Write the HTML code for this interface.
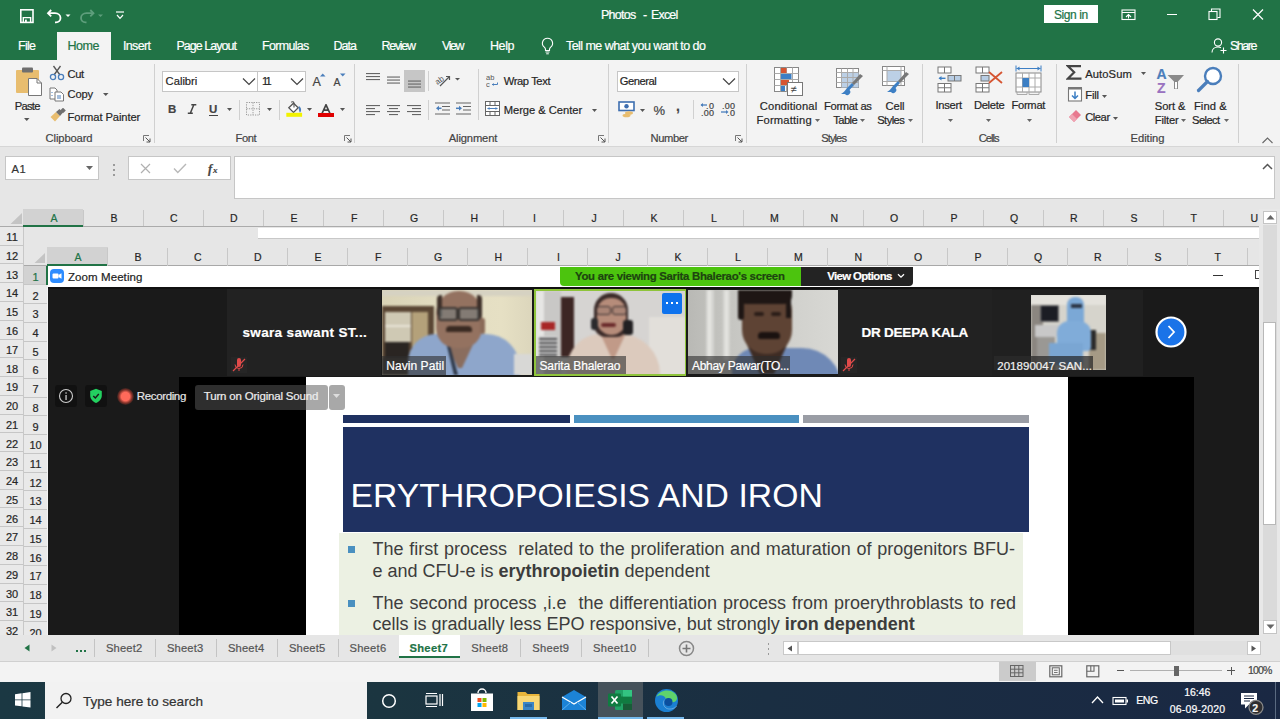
<!DOCTYPE html>
<html><head><meta charset="utf-8">
<style>
*{margin:0;padding:0;box-sizing:border-box}
html,body{width:1280px;height:719px;overflow:hidden;background:#f3f3f3;font-family:"Liberation Sans", sans-serif;position:relative}
.a{position:absolute;display:block}
.t{position:absolute;white-space:pre;line-height:1;-webkit-text-stroke:0.2px currentColor}
</style></head><body>
<div class="a" style="left:0px;top:0px;width:1280px;height:60px;background:#217346;"></div>
<svg class="a" style="left:19px;top:8px;" width="16" height="16" viewBox="0 0 16 16"><rect x="1.8" y="1.8" width="12.2" height="12.6" fill="none" stroke="#fff" stroke-width="1.6"/><path d="M4.3 14.2 V9.6 H11.6 V14.2" fill="none" stroke="#fff" stroke-width="1.4"/><rect x="6" y="11.6" width="1.8" height="2.6" fill="#fff"/></svg>
<svg class="a" style="left:46px;top:8px;" width="28" height="16" viewBox="0 0 28 16"><path d="M5.2 2 L2 5.2 L5.2 8.4" fill="none" stroke="#fff" stroke-width="1.8"/><path d="M2.5 5.2 H9 C12.3 5.2 14.5 7.3 14.5 10 C14.5 12.5 12.5 14.3 10 14.3 H9" fill="none" stroke="#fff" stroke-width="1.8"/><path d="M19.5 6.5h5l-2.5 2.5z" fill="#fff"/></svg>
<svg class="a" style="left:79px;top:8px;" width="28" height="16" viewBox="0 0 28 16"><path d="M11.3 2 L14.5 5.2 L11.3 8.4" fill="none" stroke="#5e9e7c" stroke-width="1.8"/><path d="M14 5.2 H7.5 C4.2 5.2 2 7.3 2 10 C2 12.5 4 14.3 6.5 14.3 H7.5" fill="none" stroke="#5e9e7c" stroke-width="1.8"/><path d="M19 6.5h5l-2.5 2.5z" fill="#5e9e7c"/></svg>
<svg class="a" style="left:114px;top:10px;" width="12" height="12" viewBox="0 0 12 12"><path d="M2 2h8" stroke="#fff" stroke-width="1.2"/><path d="M3 5 L6 8.3 L9 5" fill="none" stroke="#fff" stroke-width="1.2"/></svg>
<div class="t" style="left:601.00px;top:9.00px;font-size:12.5px;color:#fff;letter-spacing:-0.733px;">Photos</div>
<div class="t" style="left:643.00px;top:9.00px;font-size:12.5px;color:#fff;">-</div>
<div class="t" style="left:651.00px;top:9.00px;font-size:12.5px;color:#fff;letter-spacing:-0.822px;">Excel</div>
<div class="a" style="left:1044px;top:5px;width:54px;height:18px;background:#fff;"></div>
<div class="t" style="left:1054.00px;top:9.00px;font-size:12px;color:#217346;letter-spacing:-0.420px;">Sign in</div>
<svg class="a" style="left:1121px;top:9px;" width="16" height="12" viewBox="0 0 16 12"><rect x="1" y="1" width="13" height="9.5" fill="none" stroke="#fff" stroke-width="1.1"/><path d="M1 3.5h13" stroke="#fff" stroke-width="1"/><path d="M5 8 L7.5 5.5 L10 8" fill="none" stroke="#fff" stroke-width="1.1"/><path d="M7.5 5.5v4" stroke="#fff" stroke-width="1"/></svg>
<div class="a" style="left:1167px;top:14px;width:10px;height:1.2px;background:#fff;"></div>
<svg class="a" style="left:1208px;top:8px;" width="14" height="13" viewBox="0 0 14 13"><rect x="1" y="3.5" width="8" height="8" fill="none" stroke="#fff" stroke-width="1.1"/><path d="M3.5 3.5V1h8.5v8.5h-2.5" fill="none" stroke="#fff" stroke-width="1.1"/></svg>
<svg class="a" style="left:1252px;top:9px;" width="12" height="11" viewBox="0 0 12 11"><path d="M1 0.5 L11 10.5 M11 0.5 L1 10.5" stroke="#fff" stroke-width="1.2"/></svg>
<div class="a" style="left:57px;top:32px;width:54px;height:28px;background:#f3f3f3;"></div>
<div class="t" style="left:18.00px;top:40.00px;font-size:12.5px;color:#fff;letter-spacing:-0.730px;">File</div>
<div class="t" style="left:67.50px;top:40.00px;font-size:12.5px;color:#217346;letter-spacing:-0.464px;">Home</div>
<div class="t" style="left:123.00px;top:40.00px;font-size:12.5px;color:#fff;letter-spacing:-0.658px;">Insert</div>
<div class="t" style="left:176.50px;top:40.00px;font-size:12.5px;color:#fff;letter-spacing:-0.972px;">Page Layout</div>
<div class="t" style="left:262.00px;top:40.00px;font-size:12.5px;color:#fff;letter-spacing:-0.692px;">Formulas</div>
<div class="t" style="left:333.50px;top:40.00px;font-size:12.5px;color:#fff;letter-spacing:-0.984px;">Data</div>
<div class="t" style="left:381.50px;top:40.00px;font-size:12.5px;color:#fff;letter-spacing:-1.292px;">Review</div>
<div class="t" style="left:442.00px;top:40.00px;font-size:12.5px;color:#fff;letter-spacing:-1.447px;">View</div>
<div class="t" style="left:490.00px;top:40.00px;font-size:12.5px;color:#fff;letter-spacing:-0.419px;">Help</div>
<svg class="a" style="left:540px;top:37px;" width="15" height="18" viewBox="0 0 15 18"><path d="M7.5 1.2a5 5 0 0 0-3.2 8.9c.8.7 1.2 1.5 1.2 2.4v1h4v-1c0-.9.4-1.7 1.2-2.4A5 5 0 0 0 7.5 1.2z" fill="none" stroke="#fff" stroke-width="1.1"/><path d="M5.5 15h4M6.2 16.8h2.6" stroke="#fff" stroke-width="1"/></svg>
<div class="t" style="left:566.00px;top:40.00px;font-size:12.5px;color:#fff;letter-spacing:-0.550px;">Tell me what you want to do</div>
<svg class="a" style="left:1211px;top:37px;" width="17" height="17" viewBox="0 0 17 17"><circle cx="7" cy="5.5" r="3.6" fill="none" stroke="#fff" stroke-width="1.1"/><path d="M1 15.5c0-3.5 2.7-5.5 6-5.5 1.3 0 2.3.3 3 .7" fill="none" stroke="#fff" stroke-width="1.1"/><path d="M12.5 10.5v6M9.5 13.5h6" stroke="#fff" stroke-width="1.1"/></svg>
<div class="t" style="left:1230.00px;top:40.00px;font-size:12.5px;color:#fff;letter-spacing:-1.476px;">Share</div>
<div class="a" style="left:0px;top:60px;width:1280px;height:86px;background:#f3f3f3;"></div>
<div class="a" style="left:0px;top:146px;width:1280px;height:1px;background:#d6d6d6;"></div>
<div class="a" style="left:154px;top:64px;width:1px;height:79px;background:#d0d0d0;"></div>
<div class="a" style="left:354px;top:64px;width:1px;height:79px;background:#d0d0d0;"></div>
<div class="a" style="left:608px;top:64px;width:1px;height:79px;background:#d0d0d0;"></div>
<div class="a" style="left:746px;top:64px;width:1px;height:79px;background:#d0d0d0;"></div>
<div class="a" style="left:922px;top:64px;width:1px;height:79px;background:#d0d0d0;"></div>
<div class="a" style="left:1056px;top:64px;width:1px;height:79px;background:#d0d0d0;"></div>
<div class="a" style="left:1238px;top:64px;width:1px;height:79px;background:#d0d0d0;"></div>
<div class="t" style="left:45.60px;top:133.00px;font-size:11.2px;color:#444;letter-spacing:-0.120px;">Clipboard</div>
<div class="t" style="left:235.60px;top:133.00px;font-size:11.2px;color:#444;letter-spacing:-0.459px;">Font</div>
<div class="t" style="left:448.80px;top:133.00px;font-size:11.2px;color:#444;letter-spacing:-0.155px;">Alignment</div>
<div class="t" style="left:650.60px;top:133.00px;font-size:11.2px;color:#444;letter-spacing:-0.433px;">Number</div>
<div class="t" style="left:821.20px;top:133.00px;font-size:11.2px;color:#444;letter-spacing:-0.934px;">Styles</div>
<div class="t" style="left:978.80px;top:133.00px;font-size:11.2px;color:#444;letter-spacing:-1.018px;">Cells</div>
<div class="t" style="left:1130.60px;top:133.00px;font-size:11.2px;color:#444;letter-spacing:-0.048px;">Editing</div>
<svg class="a" style="left:143px;top:135px;" width="8" height="8" viewBox="0 0 8 8"><path d="M0.5 6V0.5H6" fill="none" stroke="#777" stroke-width="1"/><path d="M2.5 2.5L7 7M7 3.5V7H3.5" fill="none" stroke="#555" stroke-width="1"/></svg>
<svg class="a" style="left:344px;top:135px;" width="8" height="8" viewBox="0 0 8 8"><path d="M0.5 6V0.5H6" fill="none" stroke="#777" stroke-width="1"/><path d="M2.5 2.5L7 7M7 3.5V7H3.5" fill="none" stroke="#555" stroke-width="1"/></svg>
<svg class="a" style="left:598px;top:135px;" width="8" height="8" viewBox="0 0 8 8"><path d="M0.5 6V0.5H6" fill="none" stroke="#777" stroke-width="1"/><path d="M2.5 2.5L7 7M7 3.5V7H3.5" fill="none" stroke="#555" stroke-width="1"/></svg>
<svg class="a" style="left:735px;top:135px;" width="8" height="8" viewBox="0 0 8 8"><path d="M0.5 6V0.5H6" fill="none" stroke="#777" stroke-width="1"/><path d="M2.5 2.5L7 7M7 3.5V7H3.5" fill="none" stroke="#555" stroke-width="1"/></svg>
<svg class="a" style="left:1262px;top:137px;" width="11" height="7" viewBox="0 0 11 7"><path d="M0.5 6 L5.5 1 L10.5 6" fill="none" stroke="#666" stroke-width="1.1"/></svg>
<svg class="a" style="left:15px;top:66px;" width="30" height="31" viewBox="0 0 30 31"><rect x="1" y="4" width="23" height="23" rx="1" fill="#e8bd6f"/><rect x="7" y="1.5" width="11" height="5" rx="1" fill="#6f6f6f"/><path d="M13.5 12.5h8.5l4.5 4.5v12.5h-13z" fill="#fff" stroke="#777" stroke-width="1"/><path d="M22 12.5v4.5h4.5" fill="none" stroke="#777" stroke-width="1"/></svg>
<div class="t" style="left:14.80px;top:101.00px;font-size:11.2px;color:#262626;letter-spacing:-0.746px;">Paste</div>
<svg class="a" style="left:24px;top:118px;" width="6" height="4" viewBox="0 0 6 4"><path d="M0 0h5.5L2.75 3z" fill="#555"/></svg>
<svg class="a" style="left:49px;top:65px;" width="16" height="16" viewBox="0 0 16 16"><path d="M4.5 1 L11 10 M11.5 1 L5 10" stroke="#555" stroke-width="1.3"/><circle cx="4" cy="12" r="2.6" fill="none" stroke="#4a7ebb" stroke-width="1.3"/><circle cx="12" cy="12" r="2.6" fill="none" stroke="#4a7ebb" stroke-width="1.3"/></svg>
<div class="t" style="left:67.50px;top:69.00px;font-size:11.2px;color:#262626;letter-spacing:-0.401px;">Cut</div>
<svg class="a" style="left:49px;top:87px;" width="16" height="15" viewBox="0 0 16 15"><path d="M1 1h5l2 2v9H1z" fill="#fff" stroke="#777" stroke-width="1"/><path d="M6 5h6l2.5 2.5V14H6z" fill="#fff" stroke="#777" stroke-width="1"/><path d="M8 9h4M8 11h4" stroke="#4a7ebb" stroke-width="1"/><path d="M3 5v1M3 8v1" stroke="#4a7ebb" stroke-width="1"/></svg>
<div class="t" style="left:67.50px;top:89.00px;font-size:11.2px;color:#262626;letter-spacing:-0.174px;">Copy</div>
<svg class="a" style="left:103px;top:93px;" width="6" height="4" viewBox="0 0 6 4"><path d="M0 0h5.5L2.75 3z" fill="#555"/></svg>
<svg class="a" style="left:49px;top:108px;" width="17" height="15" viewBox="0 0 17 15"><path d="M1.5 9 L7 4 L11 8 L6 13.5z" fill="#e8bd6f"/><path d="M7 4 L10.5 1 L14 4.5 L11 8z" fill="#6f6f6f"/><rect x="12" y="0.5" width="4" height="4" transform="rotate(45 14 2.5)" fill="#6f6f6f"/></svg>
<div class="t" style="left:67.50px;top:112.00px;font-size:11.2px;color:#262626;letter-spacing:-0.089px;">Format Painter</div>
<div class="a" style="left:162px;top:70.5px;width:96px;height:21px;background:#fff;border:1px solid #c6c6c6"></div>
<div class="a" style="left:257px;top:70.5px;width:49px;height:21px;background:#fff;border:1px solid #c6c6c6"></div>
<div class="t" style="left:165.60px;top:76.00px;font-size:11.2px;color:#262626;">Calibri</div>
<div class="t" style="left:262.00px;top:76.00px;font-size:11.2px;color:#262626;letter-spacing:-1.891px;">11</div>
<svg class="a" style="left:242px;top:77px;" width="14" height="9" viewBox="0 0 14 9"><path d="M1 1.5 L7 7.5 L13 1.5" fill="none" stroke="#444" stroke-width="1.2"/></svg>
<svg class="a" style="left:290px;top:77px;" width="14" height="9" viewBox="0 0 14 9"><path d="M1 1.5 L7 7.5 L13 1.5" fill="none" stroke="#444" stroke-width="1.2"/></svg>
<div class="t" style="left:312.40px;top:76.00px;font-size:12.5px;color:#444;">A</div>
<svg class="a" style="left:320px;top:73px;" width="6" height="4" viewBox="0 0 6 4"><path d="M0 3.5h5.5L2.75 0.5z" fill="#4a7ebb"/></svg>
<div class="t" style="left:333.40px;top:77.00px;font-size:10.5px;color:#444;">A</div>
<svg class="a" style="left:340px;top:73px;" width="6" height="4" viewBox="0 0 6 4"><path d="M0 0.5h5.5L2.75 3.5z" fill="#4a7ebb"/></svg>
<div class="t" style="left:168.00px;top:104.00px;font-size:11.5px;color:#444;font-weight:700;">B</div>
<svg class="a" style="left:187px;top:104px;" width="10" height="10" viewBox="0 0 10 10"><path d="M4.3 0.8h5M0.8 9.2h5M6.8 0.8 L3.3 9.2" fill="none" stroke="#444" stroke-width="1.5"/></svg>
<div class="t" style="left:209.00px;top:104.00px;font-size:11.5px;color:#444;font-weight:700;">U</div>
<div class="a" style="left:209px;top:114.5px;width:8.5px;height:1px;background:#444;"></div>
<svg class="a" style="left:227px;top:108px;" width="6" height="4" viewBox="0 0 6 4"><path d="M0 0h5L2.5 3z" fill="#555"/></svg>
<svg class="a" style="left:267px;top:108px;" width="6" height="4" viewBox="0 0 6 4"><path d="M0 0h5L2.5 3z" fill="#555"/></svg>
<svg class="a" style="left:307px;top:108px;" width="6" height="4" viewBox="0 0 6 4"><path d="M0 0h5L2.5 3z" fill="#555"/></svg>
<svg class="a" style="left:339.5px;top:108px;" width="6" height="4" viewBox="0 0 6 4"><path d="M0 0h5L2.5 3z" fill="#555"/></svg>
<div class="a" style="left:239px;top:100px;width:1px;height:20px;background:#d0d0d0;"></div>
<div class="a" style="left:279px;top:100px;width:1px;height:20px;background:#d0d0d0;"></div>
<svg class="a" style="left:246px;top:102px;" width="15" height="14" viewBox="0 0 15 14"><rect x="0.5" y="0.5" width="13" height="12.5" fill="none" stroke="#999" stroke-width="1" stroke-dasharray="1.2 1.2"/><path d="M7 0.5v12.5M0.5 6.75h13" stroke="#999" stroke-width="1" stroke-dasharray="1.2 1.2"/></svg>
<svg class="a" style="left:285px;top:101px;" width="18" height="17" viewBox="0 0 18 17"><path d="M3.8 6.8 L8.5 2.2 L13.2 6.8 L8.5 11.4z" fill="#fff" stroke="#555" stroke-width="1.3"/><path d="M6.2 1.2 C7.5 0.2 9 0.8 9 2.5 V6.5" fill="none" stroke="#555" stroke-width="1.1"/><path d="M13.8 5 C16 6.5 17 9 15 11.8 C14 10 13.5 8 13.8 5z" fill="#4a7ebb"/><rect x="1.3" y="11.8" width="15.8" height="4" fill="#f2f200"/></svg>
<svg class="a" style="left:321px;top:103.5px;" width="10" height="10" viewBox="0 0 10 10"><path d="M1 9.5 L5 0.8 L9 9.5 M2.6 6.2 H7.4" fill="none" stroke="#444" stroke-width="1.7"/></svg>
<div class="a" style="left:318px;top:113.3px;width:16px;height:3.8px;background:#e00000;"></div>
<svg class="a" style="left:366px;top:72px;" width="14" height="16" viewBox="0 0 14 16"><rect x="0" y="1" width="14" height="1.1" fill="#666"/><rect x="0" y="4" width="14" height="1.1" fill="#666"/><rect x="0" y="7" width="14" height="1.1" fill="#666"/></svg>
<svg class="a" style="left:387px;top:75px;" width="13" height="16" viewBox="0 0 13 16"><rect x="0" y="1.5" width="13" height="1.1" fill="#666"/><rect x="0" y="4.5" width="13" height="1.1" fill="#666"/><rect x="0" y="7.5" width="13" height="1.1" fill="#666"/></svg>
<div class="a" style="left:403.5px;top:70px;width:21px;height:22px;background:#c6c6c6;"></div>
<svg class="a" style="left:408px;top:79px;" width="13" height="16" viewBox="0 0 13 16"><rect x="0" y="1.5" width="13" height="1.1" fill="#666"/><rect x="0" y="4.5" width="13" height="1.1" fill="#666"/><rect x="0" y="7.5" width="13" height="1.1" fill="#666"/></svg>
<div class="a" style="left:428px;top:71px;width:1px;height:20px;background:#d0d0d0;"></div>
<svg class="a" style="left:435px;top:72px;" width="26" height="16" viewBox="0 0 26 16"><text x="0" y="10" font-size="8" fill="#555" font-family="Liberation Sans" transform="rotate(-35 6 8)">ab</text><path d="M5 14 L14 5 M11 4.5h3.5V8" fill="none" stroke="#555" stroke-width="1.2"/><path d="M20 6h5L22.5 8.5z" fill="#555"/></svg>
<svg class="a" style="left:366px;top:104px;" width="14" height="16" viewBox="0 0 14 16"><rect x="0" y="1" width="14" height="1.1" fill="#666"/><rect x="0" y="4" width="9" height="1.1" fill="#666"/><rect x="0" y="7" width="14" height="1.1" fill="#666"/><rect x="0" y="10" width="9" height="1.1" fill="#666"/></svg>
<svg class="a" style="left:387px;top:104px;" width="13" height="16" viewBox="0 0 13 16"><rect x="0" y="1" width="13" height="1.1" fill="#666"/><rect x="2" y="4" width="9" height="1.1" fill="#666"/><rect x="0" y="7" width="13" height="1.1" fill="#666"/><rect x="2" y="10" width="9" height="1.1" fill="#666"/></svg>
<svg class="a" style="left:407px;top:104px;" width="14" height="16" viewBox="0 0 14 16"><rect x="0" y="1" width="14" height="1.1" fill="#666"/><rect x="5" y="4" width="9" height="1.1" fill="#666"/><rect x="0" y="7" width="14" height="1.1" fill="#666"/><rect x="5" y="10" width="9" height="1.1" fill="#666"/></svg>
<div class="a" style="left:428px;top:100px;width:1px;height:20px;background:#d0d0d0;"></div>
<svg class="a" style="left:435px;top:102px;" width="16" height="14" viewBox="0 0 16 14"><path d="M0 1h15M7 4.5h8M7 8h8M0 12h15" stroke="#666" stroke-width="1.1"/><path d="M1 6.3 L4 3.8 V8.8z" fill="#4a7ebb"/><path d="M3 6.3h3.5" stroke="#4a7ebb" stroke-width="1.5"/></svg>
<svg class="a" style="left:456px;top:102px;" width="16" height="14" viewBox="0 0 16 14"><path d="M0 1h15M7 4.5h8M7 8h8M0 12h15" stroke="#666" stroke-width="1.1"/><path d="M6 6.3 L3 3.8 V8.8z" fill="#4a7ebb"/><path d="M0 6.3h3.5" stroke="#4a7ebb" stroke-width="1.5"/></svg>
<div class="a" style="left:478px;top:69px;width:1px;height:51px;background:#d0d0d0;"></div>
<svg class="a" style="left:486px;top:73px;" width="14" height="15" viewBox="0 0 14 15"><text x="0" y="6.5" font-size="7.5" fill="#555" font-family="Liberation Sans">ab</text><text x="0" y="13.5" font-size="7.5" fill="#555" font-family="Liberation Sans">c</text><path d="M6 11.5h5.5v-2" fill="none" stroke="#4a7ebb" stroke-width="1"/><path d="M6 11.5l1.8-1.5v3z" fill="#4a7ebb"/></svg>
<div class="t" style="left:503.70px;top:76.00px;font-size:11.2px;color:#262626;letter-spacing:-0.393px;">Wrap Text</div>
<svg class="a" style="left:485px;top:101px;" width="15" height="15" viewBox="0 0 15 15"><rect x="0.5" y="0.5" width="14" height="14" fill="#fff" stroke="#666" stroke-width="1"/><path d="M0.5 4.5h14M0.5 10.5h14M5 0.5v4M10 0.5v4M5 10.5v4M10 10.5v4" stroke="#666" stroke-width="1"/><path d="M2.5 7.5h10" stroke="#4a7ebb" stroke-width="1"/><path d="M2.5 7.5l2-1.5v3zM12.5 7.5l-2-1.5v3z" fill="#4a7ebb"/></svg>
<div class="t" style="left:503.70px;top:105.00px;font-size:11.2px;color:#262626;letter-spacing:-0.034px;">Merge &amp; Center</div>
<svg class="a" style="left:592px;top:108.5px;" width="6" height="4" viewBox="0 0 6 4"><path d="M0 0h5L2.5 3z" fill="#555"/></svg>
<div class="a" style="left:617px;top:70.5px;width:122px;height:21px;background:#fff;border:1px solid #c6c6c6"></div>
<div class="t" style="left:619.80px;top:76.00px;font-size:11.2px;color:#262626;letter-spacing:-0.469px;">General</div>
<svg class="a" style="left:722px;top:77px;" width="14" height="9" viewBox="0 0 14 9"><path d="M1 1.5 L7 7.5 L13 1.5" fill="none" stroke="#444" stroke-width="1.2"/></svg>
<svg class="a" style="left:618px;top:101px;" width="18" height="17" viewBox="0 0 18 17"><rect x="1" y="1" width="15" height="8.5" fill="#fff" stroke="#3d6eb0" stroke-width="1.6"/><circle cx="8.5" cy="5.2" r="2.2" fill="#3d6eb0"/><ellipse cx="11" cy="12" rx="4" ry="1.8" fill="#e8bd6f"/><ellipse cx="8.5" cy="14.5" rx="4" ry="1.8" fill="#e8bd6f"/></svg>
<svg class="a" style="left:640px;top:109px;" width="6" height="4" viewBox="0 0 6 4"><path d="M0 0h5L2.5 3z" fill="#555"/></svg>
<div class="t" style="left:653.50px;top:104.00px;font-size:13px;color:#444;">%</div>
<div class="t" style="left:676.00px;top:99.00px;font-size:14px;color:#444;font-weight:700;">,</div>
<div class="a" style="left:693px;top:100px;width:1px;height:19px;background:#d0d0d0;"></div>
<div class="t" style="left:706.00px;top:102.00px;font-size:9px;color:#444;letter-spacing:0.500px;">.0</div>
<div class="t" style="left:701.00px;top:109.00px;font-size:9px;color:#444;letter-spacing:0.247px;">.00</div>
<svg class="a" style="left:700px;top:102px;" width="8" height="6" viewBox="0 0 8 6"><path d="M1 3h6" stroke="#4a7ebb" stroke-width="1.3"/><path d="M0.5 3L3 1v4z" fill="#4a7ebb"/></svg>
<div class="t" style="left:722.00px;top:102.00px;font-size:9px;color:#444;letter-spacing:0.247px;">.00</div>
<div class="t" style="left:727.00px;top:109.00px;font-size:9px;color:#444;letter-spacing:0.500px;">.0</div>
<svg class="a" style="left:721px;top:109px;" width="8" height="6" viewBox="0 0 8 6"><path d="M0 3h6" stroke="#4a7ebb" stroke-width="1.3"/><path d="M7.5 3L5 1v4z" fill="#4a7ebb"/></svg>
<svg class="a" style="left:774px;top:67px;" width="30" height="30" viewBox="0 0 30 30"><rect x="0.5" y="0.5" width="24" height="24" fill="#fff" stroke="#888" stroke-width="1"/><path d="M0.5 6.5h24M0.5 12.5h24M0.5 18.5h24M6.5 0.5v24M12.5 0.5v24M18.5 0.5v24" stroke="#aaa" stroke-width="1"/><rect x="7" y="1" width="5.5" height="5" fill="#d65532"/><rect x="7" y="7" width="10.5" height="5" fill="#3d7fc4"/><rect x="7" y="13" width="8" height="5" fill="#d65532"/><rect x="7" y="19" width="4" height="5" fill="#3d7fc4"/><rect x="13.5" y="15.5" width="15" height="13" fill="#fff" stroke="#777" stroke-width="1"/><text x="16.5" y="26" font-size="11" fill="#444" font-family="Liberation Sans">≠</text></svg>
<div class="t" style="left:759.80px;top:101.00px;font-size:11.2px;color:#262626;letter-spacing:0.141px;">Conditional</div>
<div class="t" style="left:756.50px;top:115.00px;font-size:11.2px;color:#262626;letter-spacing:0.184px;">Formatting</div>
<svg class="a" style="left:814.5px;top:119px;" width="6" height="4" viewBox="0 0 6 4"><path d="M0 0h5L2.5 3z" fill="#666"/></svg>
<svg class="a" style="left:836px;top:68px;" width="28" height="28" viewBox="0 0 28 28"><rect x="0.5" y="0.5" width="22" height="19" fill="#fff" stroke="#888" stroke-width="1"/><rect x="5.5" y="4.5" width="17" height="15" fill="#bcd0e6"/><path d="M0.5 4.5h22M0.5 9.5h22M0.5 14.5h22M5.5 0.5v19M11.5 0.5v19M17 0.5v19" stroke="#aaa" stroke-width="1"/><path d="M11 20 L16 15 L18 17 L13.5 22 a3 3 0 0 1-4.5 4 H5 c2 -1 4-3 6-6z" fill="#3d7fc4"/><path d="M16 15 L24 6 L27 8 L18 17z" fill="#777"/></svg>
<div class="t" style="left:824.00px;top:101.00px;font-size:11.2px;color:#262626;letter-spacing:-0.308px;">Format as</div>
<div class="t" style="left:833.30px;top:115.00px;font-size:11.2px;color:#262626;letter-spacing:-0.580px;">Table</div>
<svg class="a" style="left:860.3px;top:119px;" width="6" height="4" viewBox="0 0 6 4"><path d="M0 0h5L2.5 3z" fill="#666"/></svg>
<svg class="a" style="left:882px;top:66px;" width="29" height="29" viewBox="0 0 29 29"><rect x="0.5" y="0.5" width="22" height="19" fill="#fff" stroke="#888" stroke-width="1"/><rect x="5" y="4" width="14" height="11" fill="#bcd0e6"/><path d="M0.5 4.5h22M0.5 15.5h22M5 0.5v19M19 0.5v19" stroke="#aaa" stroke-width="1"/><path d="M11 20 L16 15 L18 17 L13.5 22 a3 3 0 0 1-4.5 4 H5 c2 -1 4-3 6-6z" fill="#3d7fc4"/><path d="M16 15 L24 6 L27 8 L18 17z" fill="#777"/></svg>
<div class="t" style="left:885.60px;top:101.00px;font-size:11.2px;color:#262626;letter-spacing:-0.129px;">Cell</div>
<div class="t" style="left:877.20px;top:115.00px;font-size:11.2px;color:#262626;letter-spacing:-0.554px;">Styles</div>
<svg class="a" style="left:908px;top:119px;" width="6" height="4" viewBox="0 0 6 4"><path d="M0 0h5L2.5 3z" fill="#666"/></svg>
<svg class="a" style="left:937px;top:66px;" width="26" height="27" viewBox="0 0 26 27"><rect x="1" y="1" width="13" height="6" fill="#fff" stroke="#777" stroke-width="1"/><path d="M7.5 1v6" stroke="#777"/><rect x="11" y="9.5" width="13" height="5.5" fill="#b8cde4" stroke="#777" stroke-width="1"/><path d="M17.5 9.5v5.5" stroke="#777"/><path d="M2.5 12.3h6" stroke="#3d7fc4" stroke-width="1.4"/><path d="M1.5 12.3 L4.5 10 v4.6z" fill="#3d7fc4"/><rect x="1" y="17.5" width="13" height="8.5" fill="#fff" stroke="#777" stroke-width="1"/><path d="M7.5 17.5v8.5M1 21.75h13" stroke="#777"/></svg>
<div class="t" style="left:935.50px;top:100.00px;font-size:11.2px;color:#262626;letter-spacing:-0.274px;">Insert</div>
<svg class="a" style="left:947.5px;top:119px;" width="6" height="4" viewBox="0 0 6 4"><path d="M0 0h5L2.5 3z" fill="#666"/></svg>
<svg class="a" style="left:975px;top:66px;" width="30" height="28" viewBox="0 0 30 28"><rect x="1" y="1" width="13" height="6" fill="#fff" stroke="#777" stroke-width="1"/><path d="M7.5 1v6" stroke="#777"/><rect x="6" y="9.5" width="8" height="5.5" fill="#b8cde4" stroke="#777" stroke-width="1"/><rect x="1" y="17.5" width="13" height="8.5" fill="#fff" stroke="#777" stroke-width="1"/><path d="M7.5 17.5v8.5M1 21.75h13" stroke="#777"/><path d="M14 6 L27 17 M27 6 L14 17" stroke="#d65532" stroke-width="1.8"/></svg>
<div class="t" style="left:974.00px;top:100.00px;font-size:11.2px;color:#262626;letter-spacing:-0.343px;">Delete</div>
<svg class="a" style="left:986.3px;top:119px;" width="6" height="4" viewBox="0 0 6 4"><path d="M0 0h5L2.5 3z" fill="#666"/></svg>
<svg class="a" style="left:1015px;top:65px;" width="28" height="31" viewBox="0 0 28 31"><path d="M1.5 3.5h24" stroke="#3d7fc4" stroke-width="1"/><path d="M1 0.5v6M26 0.5v6" stroke="#3d7fc4" stroke-width="1"/><path d="M1.5 3.5l3-2v4zM25.5 3.5l-3-2v4z" fill="#3d7fc4"/><rect x="1" y="8" width="25" height="19" fill="#fff" stroke="#888" stroke-width="1"/><path d="M1 13h25M1 22h25M7.5 8v19M14 8v19M20 8v19" stroke="#aaa"/><rect x="7.5" y="13" width="6.5" height="9" fill="#3d7fc4"/><path d="M2 27 v2.5 h10 v-2.5 M14 27 v2.5 h10 v-2.5" fill="none" stroke="#aaa"/></svg>
<div class="t" style="left:1011.50px;top:100.00px;font-size:11.2px;color:#262626;letter-spacing:-0.304px;">Format</div>
<svg class="a" style="left:1027px;top:119px;" width="6" height="4" viewBox="0 0 6 4"><path d="M0 0h5L2.5 3z" fill="#666"/></svg>
<svg class="a" style="left:1066px;top:65px;" width="17" height="15" viewBox="0 0 17 15"><path d="M15 1.2 H2 L8.2 7.3 L2 13.6 H15.5" fill="none" stroke="#444" stroke-width="2.2" stroke-linejoin="miter"/></svg>
<div class="t" style="left:1085.20px;top:69.00px;font-size:11.2px;color:#262626;letter-spacing:0.100px;">AutoSum</div>
<svg class="a" style="left:1141px;top:72px;" width="6" height="4" viewBox="0 0 6 4"><path d="M0 0h5L2.5 3z" fill="#555"/></svg>
<svg class="a" style="left:1067px;top:86px;" width="16" height="16" viewBox="0 0 16 16"><rect x="1.5" y="2.5" width="13" height="12.5" fill="#fff" stroke="#777" stroke-width="1.1"/><rect x="1" y="1" width="14" height="2.5" fill="#777"/><path d="M8 5.5v7M5 9.5l3 3 3-3" fill="none" stroke="#3d7fc4" stroke-width="1.5"/></svg>
<div class="t" style="left:1085.20px;top:90.00px;font-size:11.2px;color:#262626;letter-spacing:-0.135px;">Fill</div>
<svg class="a" style="left:1102px;top:95px;" width="6" height="4" viewBox="0 0 6 4"><path d="M0 0h5L2.5 3z" fill="#555"/></svg>
<svg class="a" style="left:1068px;top:108px;" width="14" height="14" viewBox="0 0 14 14"><path d="M1 9 L8 2 L13 7 L6 14z" fill="#e8798f"/><path d="M1 9 L4 6 L9 11 L6 14z" fill="#f0a3b2"/></svg>
<div class="t" style="left:1085.20px;top:112.00px;font-size:11.2px;color:#262626;letter-spacing:-0.452px;">Clear</div>
<svg class="a" style="left:1113px;top:117px;" width="6" height="4" viewBox="0 0 6 4"><path d="M0 0h5L2.5 3z" fill="#555"/></svg>
<div class="t" style="left:1156.60px;top:67.00px;font-size:14px;color:#4a7ebb;font-weight:700;">A</div>
<div class="t" style="left:1157.00px;top:81.00px;font-size:14px;color:#9a72c0;font-weight:700;">Z</div>
<svg class="a" style="left:1167px;top:74px;" width="18" height="16" viewBox="0 0 18 16"><path d="M0.5 1 H17 L11 7.5 V15 H7 V7.5z" fill="#8a8a8a"/><path d="M8 8 v6.5 h2 v-6.5z" fill="#fff"/></svg>
<div class="t" style="left:1154.80px;top:101.00px;font-size:11.2px;color:#262626;letter-spacing:-0.085px;">Sort &amp;</div>
<div class="t" style="left:1154.80px;top:115.00px;font-size:11.2px;color:#262626;letter-spacing:-0.187px;">Filter</div>
<svg class="a" style="left:1181.2px;top:119px;" width="6" height="4" viewBox="0 0 6 4"><path d="M0 0h5L2.5 3z" fill="#666"/></svg>
<svg class="a" style="left:1196px;top:66px;" width="28" height="28" viewBox="0 0 28 28"><circle cx="17" cy="10" r="8" fill="#fff" stroke="#4a7ebb" stroke-width="2.4"/><path d="M11.5 15.5 L2.5 24.5" stroke="#4a7ebb" stroke-width="3.2" stroke-linecap="round"/></svg>
<div class="t" style="left:1193.90px;top:101.00px;font-size:11.2px;color:#262626;letter-spacing:0.106px;">Find &amp;</div>
<div class="t" style="left:1192.10px;top:115.00px;font-size:11.2px;color:#262626;letter-spacing:-0.617px;">Select</div>
<svg class="a" style="left:1223.7px;top:119px;" width="6" height="4" viewBox="0 0 6 4"><path d="M0 0h5L2.5 3z" fill="#666"/></svg>
<div class="a" style="left:0px;top:147px;width:1280px;height:62px;background:#e6e6e6;"></div>
<div class="a" style="left:5px;top:156px;width:94px;height:24px;background:#fff;border:1px solid #c6c6c6"></div>
<div class="t" style="left:11.50px;top:164.00px;font-size:11.2px;color:#333;letter-spacing:0.538px;">A1</div>
<svg class="a" style="left:86px;top:166px;" width="8" height="5" viewBox="0 0 8 5"><path d="M0 0h7L3.5 4z" fill="#666"/></svg>
<div class="a" style="left:113px;top:164px;width:2px;height:2px;background:#9a9a9a;"></div>
<div class="a" style="left:113px;top:169px;width:2px;height:2px;background:#9a9a9a;"></div>
<div class="a" style="left:113px;top:174px;width:2px;height:2px;background:#9a9a9a;"></div>
<div class="a" style="left:128px;top:156px;width:103px;height:24px;background:#fff;border:1px solid #c6c6c6"></div>
<svg class="a" style="left:140px;top:163px;" width="11" height="11" viewBox="0 0 11 11"><path d="M1 1 L10 10 M10 1 L1 10" stroke="#b0b0b0" stroke-width="1.2"/></svg>
<svg class="a" style="left:173px;top:163px;" width="14" height="11" viewBox="0 0 14 11"><path d="M1 5.5 L4.8 9.5 L13 1" fill="none" stroke="#b8b8b8" stroke-width="1.4"/></svg>
<div class="t" style="left:208.00px;top:163.00px;font-size:12.5px;color:#444;font-weight:700;font-family:'Liberation Serif', serif;font-style:italic;">f</div>
<div class="t" style="left:213.00px;top:166.00px;font-size:9px;color:#444;font-weight:700;font-family:'Liberation Serif', serif;font-style:italic;">x</div>
<div class="a" style="left:234px;top:156px;width:1041px;height:43px;background:#fff;border:1px solid #c6c6c6"></div>
<svg class="a" style="left:1262px;top:163px;" width="11" height="7" viewBox="0 0 11 7"><path d="M1 6 L5.5 1.5 L10 6" fill="none" stroke="#555" stroke-width="1.5"/></svg>
<div class="a" style="left:0px;top:209px;width:1259px;height:18px;background:#e6e6e6;"></div>
<div class="a" style="left:0px;top:226px;width:1259px;height:1px;background:#ababab;"></div>
<div class="a" style="left:23px;top:209px;width:60px;height:17px;background:#d2d2d2;"></div>
<div class="a" style="left:23px;top:225px;width:60px;height:2px;background:#217346;"></div>
<svg class="a" style="left:8.5px;top:212px;" width="14" height="13" viewBox="0 0 14 13"><path d="M13 1 V12 H1.5z" fill="#c4c4c4"/></svg>
<div class="t" style="left:50.50px;top:213.00px;font-size:10.5px;color:#217346;">A</div>
<div class="a" style="left:83px;top:210px;width:1px;height:16px;background:#c8c8c8;"></div>
<div class="t" style="left:110.50px;top:213.00px;font-size:10.5px;color:#262626;">B</div>
<div class="a" style="left:143px;top:210px;width:1px;height:16px;background:#c8c8c8;"></div>
<div class="t" style="left:170.00px;top:213.00px;font-size:10.5px;color:#262626;">C</div>
<div class="a" style="left:203px;top:210px;width:1px;height:16px;background:#c8c8c8;"></div>
<div class="t" style="left:230.00px;top:213.00px;font-size:10.5px;color:#262626;">D</div>
<div class="a" style="left:263px;top:210px;width:1px;height:16px;background:#c8c8c8;"></div>
<div class="t" style="left:290.50px;top:213.00px;font-size:10.5px;color:#262626;">E</div>
<div class="a" style="left:323px;top:210px;width:1px;height:16px;background:#c8c8c8;"></div>
<div class="t" style="left:351.00px;top:213.00px;font-size:10.5px;color:#262626;">F</div>
<div class="a" style="left:383px;top:210px;width:1px;height:16px;background:#c8c8c8;"></div>
<div class="t" style="left:410.00px;top:213.00px;font-size:10.5px;color:#262626;">G</div>
<div class="a" style="left:443px;top:210px;width:1px;height:16px;background:#c8c8c8;"></div>
<div class="t" style="left:470.50px;top:213.00px;font-size:10.5px;color:#262626;">H</div>
<div class="a" style="left:503px;top:210px;width:1px;height:16px;background:#c8c8c8;"></div>
<div class="t" style="left:533.00px;top:213.00px;font-size:10.5px;color:#262626;">I</div>
<div class="a" style="left:563px;top:210px;width:1px;height:16px;background:#c8c8c8;"></div>
<div class="t" style="left:591.50px;top:213.00px;font-size:10.5px;color:#262626;">J</div>
<div class="a" style="left:623px;top:210px;width:1px;height:16px;background:#c8c8c8;"></div>
<div class="t" style="left:650.50px;top:213.00px;font-size:10.5px;color:#262626;">K</div>
<div class="a" style="left:683px;top:210px;width:1px;height:16px;background:#c8c8c8;"></div>
<div class="t" style="left:711.00px;top:213.00px;font-size:10.5px;color:#262626;">L</div>
<div class="a" style="left:743px;top:210px;width:1px;height:16px;background:#c8c8c8;"></div>
<div class="t" style="left:770.00px;top:213.00px;font-size:10.5px;color:#262626;">M</div>
<div class="a" style="left:803px;top:210px;width:1px;height:16px;background:#c8c8c8;"></div>
<div class="t" style="left:830.50px;top:213.00px;font-size:10.5px;color:#262626;">N</div>
<div class="a" style="left:863px;top:210px;width:1px;height:16px;background:#c8c8c8;"></div>
<div class="t" style="left:890.00px;top:213.00px;font-size:10.5px;color:#262626;">O</div>
<div class="a" style="left:923px;top:210px;width:1px;height:16px;background:#c8c8c8;"></div>
<div class="t" style="left:950.50px;top:213.00px;font-size:10.5px;color:#262626;">P</div>
<div class="a" style="left:983px;top:210px;width:1px;height:16px;background:#c8c8c8;"></div>
<div class="t" style="left:1010.00px;top:213.00px;font-size:10.5px;color:#262626;">Q</div>
<div class="a" style="left:1043px;top:210px;width:1px;height:16px;background:#c8c8c8;"></div>
<div class="t" style="left:1070.00px;top:213.00px;font-size:10.5px;color:#262626;">R</div>
<div class="a" style="left:1103px;top:210px;width:1px;height:16px;background:#c8c8c8;"></div>
<div class="t" style="left:1130.50px;top:213.00px;font-size:10.5px;color:#262626;">S</div>
<div class="a" style="left:1163px;top:210px;width:1px;height:16px;background:#c8c8c8;"></div>
<div class="t" style="left:1190.50px;top:213.00px;font-size:10.5px;color:#262626;">T</div>
<div class="a" style="left:1223px;top:210px;width:1px;height:16px;background:#c8c8c8;"></div>
<div class="t" style="left:1250.50px;top:213.00px;font-size:10.5px;color:#262626;">U</div>
<div class="a" style="left:0px;top:227px;width:23px;height:408px;background:#e9e9e9;"></div>
<div class="a" style="left:23px;top:227px;width:1px;height:408px;background:#c8c8c8;"></div>
<div class="a" style="left:0px;top:245px;width:23px;height:1px;background:#c6c6c6;"></div>
<div class="t" style="left:6.35px;top:232.00px;font-size:11px;color:#262626;">11</div>
<div class="a" style="left:0px;top:263px;width:23px;height:1px;background:#c6c6c6;"></div>
<div class="t" style="left:5.94px;top:251.00px;font-size:11px;color:#262626;">12</div>
<div class="a" style="left:0px;top:282px;width:23px;height:1px;background:#c6c6c6;"></div>
<div class="t" style="left:5.94px;top:270.00px;font-size:11px;color:#262626;">13</div>
<div class="a" style="left:0px;top:301px;width:23px;height:1px;background:#c6c6c6;"></div>
<div class="t" style="left:5.94px;top:288.00px;font-size:11px;color:#262626;">14</div>
<div class="a" style="left:0px;top:320px;width:23px;height:1px;background:#c6c6c6;"></div>
<div class="t" style="left:5.94px;top:307.00px;font-size:11px;color:#262626;">15</div>
<div class="a" style="left:0px;top:339px;width:23px;height:1px;background:#c6c6c6;"></div>
<div class="t" style="left:5.94px;top:326.00px;font-size:11px;color:#262626;">16</div>
<div class="a" style="left:0px;top:357px;width:23px;height:1px;background:#c6c6c6;"></div>
<div class="t" style="left:5.94px;top:345.00px;font-size:11px;color:#262626;">17</div>
<div class="a" style="left:0px;top:376px;width:23px;height:1px;background:#c6c6c6;"></div>
<div class="t" style="left:5.94px;top:364.00px;font-size:11px;color:#262626;">18</div>
<div class="a" style="left:0px;top:395px;width:23px;height:1px;background:#c6c6c6;"></div>
<div class="t" style="left:5.94px;top:382.00px;font-size:11px;color:#262626;">19</div>
<div class="a" style="left:0px;top:414px;width:23px;height:1px;background:#c6c6c6;"></div>
<div class="t" style="left:5.94px;top:401.00px;font-size:11px;color:#262626;">20</div>
<div class="a" style="left:0px;top:432px;width:23px;height:1px;background:#c6c6c6;"></div>
<div class="t" style="left:5.94px;top:420.00px;font-size:11px;color:#262626;">21</div>
<div class="a" style="left:0px;top:451px;width:23px;height:1px;background:#c6c6c6;"></div>
<div class="t" style="left:5.94px;top:439.00px;font-size:11px;color:#262626;">22</div>
<div class="a" style="left:0px;top:470px;width:23px;height:1px;background:#c6c6c6;"></div>
<div class="t" style="left:5.94px;top:457.00px;font-size:11px;color:#262626;">23</div>
<div class="a" style="left:0px;top:489px;width:23px;height:1px;background:#c6c6c6;"></div>
<div class="t" style="left:5.94px;top:476.00px;font-size:11px;color:#262626;">24</div>
<div class="a" style="left:0px;top:507px;width:23px;height:1px;background:#c6c6c6;"></div>
<div class="t" style="left:5.94px;top:495.00px;font-size:11px;color:#262626;">25</div>
<div class="a" style="left:0px;top:526px;width:23px;height:1px;background:#c6c6c6;"></div>
<div class="t" style="left:5.94px;top:514.00px;font-size:11px;color:#262626;">26</div>
<div class="a" style="left:0px;top:545px;width:23px;height:1px;background:#c6c6c6;"></div>
<div class="t" style="left:5.94px;top:532.00px;font-size:11px;color:#262626;">27</div>
<div class="a" style="left:0px;top:564px;width:23px;height:1px;background:#c6c6c6;"></div>
<div class="t" style="left:5.94px;top:551.00px;font-size:11px;color:#262626;">28</div>
<div class="a" style="left:0px;top:583px;width:23px;height:1px;background:#c6c6c6;"></div>
<div class="t" style="left:5.94px;top:570.00px;font-size:11px;color:#262626;">29</div>
<div class="a" style="left:0px;top:601px;width:23px;height:1px;background:#c6c6c6;"></div>
<div class="t" style="left:5.94px;top:589.00px;font-size:11px;color:#262626;">30</div>
<div class="a" style="left:0px;top:620px;width:23px;height:1px;background:#c6c6c6;"></div>
<div class="t" style="left:5.94px;top:607.00px;font-size:11px;color:#262626;">31</div>
<div class="a" style="left:0px;top:639px;width:23px;height:1px;background:#c6c6c6;"></div>
<div class="t" style="left:5.94px;top:626.00px;font-size:11px;color:#262626;">32</div>
<div class="a" style="left:24px;top:227px;width:1235px;height:39px;background:#e6e6e6;"></div>
<div class="a" style="left:258px;top:227.5px;width:1001px;height:11px;background:#fff;border-bottom:1px solid #c8c8c8"></div>
<svg class="a" style="left:32.5px;top:251.5px;" width="13" height="12" viewBox="0 0 13 12"><path d="M12 1 V11 H1.5z" fill="#c4c4c4"/></svg>
<div class="a" style="left:47px;top:247px;width:1212px;height:19px;background:#e6e6e6;"></div>
<div class="a" style="left:47px;top:247px;width:61px;height:18px;background:#d2d2d2;"></div>
<div class="a" style="left:24px;top:265px;width:1235px;height:1px;background:#a8a8a8;"></div>
<div class="a" style="left:47px;top:264px;width:61px;height:2px;background:#217346;"></div>
<div class="a" style="left:1247px;top:248px;width:1px;height:17px;background:#c8c8c8;"></div>
<div class="a" style="left:1258.5px;top:227px;width:1px;height:408px;background:#c8c8c8;"></div>
<div class="t" style="left:74.50px;top:252.00px;font-size:10.5px;color:#217346;">A</div>
<div class="a" style="left:107px;top:248px;width:1px;height:17.5px;background:#c8c8c8;"></div>
<div class="t" style="left:134.50px;top:252.00px;font-size:10.5px;color:#262626;">B</div>
<div class="a" style="left:167px;top:248px;width:1px;height:17.5px;background:#c8c8c8;"></div>
<div class="t" style="left:194.00px;top:252.00px;font-size:10.5px;color:#262626;">C</div>
<div class="a" style="left:227px;top:248px;width:1px;height:17.5px;background:#c8c8c8;"></div>
<div class="t" style="left:254.00px;top:252.00px;font-size:10.5px;color:#262626;">D</div>
<div class="a" style="left:287px;top:248px;width:1px;height:17.5px;background:#c8c8c8;"></div>
<div class="t" style="left:314.50px;top:252.00px;font-size:10.5px;color:#262626;">E</div>
<div class="a" style="left:347px;top:248px;width:1px;height:17.5px;background:#c8c8c8;"></div>
<div class="t" style="left:375.00px;top:252.00px;font-size:10.5px;color:#262626;">F</div>
<div class="a" style="left:407px;top:248px;width:1px;height:17.5px;background:#c8c8c8;"></div>
<div class="t" style="left:434.00px;top:252.00px;font-size:10.5px;color:#262626;">G</div>
<div class="a" style="left:467px;top:248px;width:1px;height:17.5px;background:#c8c8c8;"></div>
<div class="t" style="left:494.50px;top:252.00px;font-size:10.5px;color:#262626;">H</div>
<div class="a" style="left:527px;top:248px;width:1px;height:17.5px;background:#c8c8c8;"></div>
<div class="t" style="left:557.00px;top:252.00px;font-size:10.5px;color:#262626;">I</div>
<div class="a" style="left:587px;top:248px;width:1px;height:17.5px;background:#c8c8c8;"></div>
<div class="t" style="left:615.50px;top:252.00px;font-size:10.5px;color:#262626;">J</div>
<div class="a" style="left:647px;top:248px;width:1px;height:17.5px;background:#c8c8c8;"></div>
<div class="t" style="left:674.50px;top:252.00px;font-size:10.5px;color:#262626;">K</div>
<div class="a" style="left:707px;top:248px;width:1px;height:17.5px;background:#c8c8c8;"></div>
<div class="t" style="left:735.00px;top:252.00px;font-size:10.5px;color:#262626;">L</div>
<div class="a" style="left:767px;top:248px;width:1px;height:17.5px;background:#c8c8c8;"></div>
<div class="t" style="left:794.00px;top:252.00px;font-size:10.5px;color:#262626;">M</div>
<div class="a" style="left:827px;top:248px;width:1px;height:17.5px;background:#c8c8c8;"></div>
<div class="t" style="left:854.50px;top:252.00px;font-size:10.5px;color:#262626;">N</div>
<div class="a" style="left:887px;top:248px;width:1px;height:17.5px;background:#c8c8c8;"></div>
<div class="t" style="left:914.00px;top:252.00px;font-size:10.5px;color:#262626;">O</div>
<div class="a" style="left:947px;top:248px;width:1px;height:17.5px;background:#c8c8c8;"></div>
<div class="t" style="left:974.50px;top:252.00px;font-size:10.5px;color:#262626;">P</div>
<div class="a" style="left:1007px;top:248px;width:1px;height:17.5px;background:#c8c8c8;"></div>
<div class="t" style="left:1034.00px;top:252.00px;font-size:10.5px;color:#262626;">Q</div>
<div class="a" style="left:1067px;top:248px;width:1px;height:17.5px;background:#c8c8c8;"></div>
<div class="t" style="left:1094.00px;top:252.00px;font-size:10.5px;color:#262626;">R</div>
<div class="a" style="left:1127px;top:248px;width:1px;height:17.5px;background:#c8c8c8;"></div>
<div class="t" style="left:1154.50px;top:252.00px;font-size:10.5px;color:#262626;">S</div>
<div class="a" style="left:1187px;top:248px;width:1px;height:17.5px;background:#c8c8c8;"></div>
<div class="t" style="left:1214.50px;top:252.00px;font-size:10.5px;color:#262626;">T</div>
<div class="a" style="left:24px;top:266px;width:23px;height:369px;background:#e9e9e9;"></div>
<div class="a" style="left:24px;top:266px;width:23px;height:19px;background:#d2d2d2;"></div>
<div class="a" style="left:24px;top:284px;width:23px;height:1px;background:#c6c6c6;"></div>
<div class="t" style="left:32.50px;top:272.00px;font-size:11px;color:#217346;">1</div>
<div class="a" style="left:24px;top:303px;width:23px;height:1px;background:#c6c6c6;"></div>
<div class="t" style="left:32.50px;top:291.00px;font-size:11px;color:#262626;">2</div>
<div class="a" style="left:24px;top:322px;width:23px;height:1px;background:#c6c6c6;"></div>
<div class="t" style="left:32.50px;top:309.00px;font-size:11px;color:#262626;">3</div>
<div class="a" style="left:24px;top:341px;width:23px;height:1px;background:#c6c6c6;"></div>
<div class="t" style="left:32.50px;top:328.00px;font-size:11px;color:#262626;">4</div>
<div class="a" style="left:24px;top:359px;width:23px;height:1px;background:#c6c6c6;"></div>
<div class="t" style="left:32.50px;top:347.00px;font-size:11px;color:#262626;">5</div>
<div class="a" style="left:24px;top:378px;width:23px;height:1px;background:#c6c6c6;"></div>
<div class="t" style="left:32.50px;top:365.00px;font-size:11px;color:#262626;">6</div>
<div class="a" style="left:24px;top:397px;width:23px;height:1px;background:#c6c6c6;"></div>
<div class="t" style="left:32.50px;top:384.00px;font-size:11px;color:#262626;">7</div>
<div class="a" style="left:24px;top:415px;width:23px;height:1px;background:#c6c6c6;"></div>
<div class="t" style="left:32.50px;top:403.00px;font-size:11px;color:#262626;">8</div>
<div class="a" style="left:24px;top:434px;width:23px;height:1px;background:#c6c6c6;"></div>
<div class="t" style="left:32.50px;top:422.00px;font-size:11px;color:#262626;">9</div>
<div class="a" style="left:24px;top:453px;width:23px;height:1px;background:#c6c6c6;"></div>
<div class="t" style="left:29.44px;top:440.00px;font-size:11px;color:#262626;">10</div>
<div class="a" style="left:24px;top:472px;width:23px;height:1px;background:#c6c6c6;"></div>
<div class="t" style="left:29.85px;top:459.00px;font-size:11px;color:#262626;">11</div>
<div class="a" style="left:24px;top:490px;width:23px;height:1px;background:#c6c6c6;"></div>
<div class="t" style="left:29.44px;top:478.00px;font-size:11px;color:#262626;">12</div>
<div class="a" style="left:24px;top:509px;width:23px;height:1px;background:#c6c6c6;"></div>
<div class="t" style="left:29.44px;top:496.00px;font-size:11px;color:#262626;">13</div>
<div class="a" style="left:24px;top:528px;width:23px;height:1px;background:#c6c6c6;"></div>
<div class="t" style="left:29.44px;top:515.00px;font-size:11px;color:#262626;">14</div>
<div class="a" style="left:24px;top:546px;width:23px;height:1px;background:#c6c6c6;"></div>
<div class="t" style="left:29.44px;top:534.00px;font-size:11px;color:#262626;">15</div>
<div class="a" style="left:24px;top:565px;width:23px;height:1px;background:#c6c6c6;"></div>
<div class="t" style="left:29.44px;top:553.00px;font-size:11px;color:#262626;">16</div>
<div class="a" style="left:24px;top:584px;width:23px;height:1px;background:#c6c6c6;"></div>
<div class="t" style="left:29.44px;top:571.00px;font-size:11px;color:#262626;">17</div>
<div class="a" style="left:24px;top:603px;width:23px;height:1px;background:#c6c6c6;"></div>
<div class="t" style="left:29.44px;top:590.00px;font-size:11px;color:#262626;">18</div>
<div class="a" style="left:24px;top:621px;width:23px;height:1px;background:#c6c6c6;"></div>
<div class="t" style="left:29.44px;top:609.00px;font-size:11px;color:#262626;">19</div>
<div class="a" style="left:24px;top:640px;width:23px;height:1px;background:#c6c6c6;"></div>
<div class="t" style="left:29.44px;top:628.00px;font-size:11px;color:#262626;">20</div>
<div class="a" style="left:46px;top:266px;width:1.5px;height:19px;background:#217346;"></div>
<div class="a" style="left:47.5px;top:266px;width:1211.5px;height:21px;background:#fff;"></div>
<svg class="a" style="left:50px;top:269px;" width="14" height="14" viewBox="0 0 14 14"><rect x="0" y="0" width="14" height="14" rx="4" fill="#2d8cff"/><rect x="2.5" y="4.5" width="6" height="5" rx="1" fill="#fff"/><path d="M8.5 6 L11.5 4.3 V9.7 L8.5 8z" fill="#fff"/></svg>
<div class="t" style="left:68.00px;top:272.00px;font-size:11.5px;color:#222;letter-spacing:0.081px;">Zoom Meeting</div>
<div class="a" style="left:1213px;top:274.5px;width:10px;height:1.2px;background:#333;"></div>
<div class="a" style="left:1255px;top:270px;width:4px;height:9px;background:none;border:1px solid #444;border-right:none"></div>
<div class="a" style="left:47.5px;top:287px;width:1211.5px;height:348px;background:#1a1a1a;"></div>
<div class="a" style="left:47.5px;top:287px;width:1211.5px;height:2px;background:#111;"></div>
<div class="a" style="left:559.5px;top:266.5px;width:241px;height:19.5px;background:#4cc40e;border-radius:0 0 0 4px"></div>
<div class="t" style="left:575.00px;top:271.00px;font-size:11.4px;color:#1d4410;font-weight:700;letter-spacing:-0.300px;">You are viewing Sarita Bhalerao's screen</div>
<div class="a" style="left:800.5px;top:266.5px;width:112.7px;height:19.3px;background:#232323;border-radius:0 0 4px 0"></div>
<div class="t" style="left:827.20px;top:271.00px;font-size:11.4px;color:#fff;font-weight:700;letter-spacing:-0.619px;">View Options</div>
<svg class="a" style="left:897px;top:273px;" width="8" height="6" viewBox="0 0 8 6"><path d="M1 1.2 L4 4.2 L7 1.2" fill="none" stroke="#fff" stroke-width="1.3"/></svg>
<div class="a" style="left:227px;top:289px;width:154px;height:87px;background:#222;"></div>
<div class="t" style="left:242.50px;top:326.00px;font-size:13.5px;color:#fff;font-weight:700;letter-spacing:0.335px;">swara sawant ST...</div>
<svg class="a" style="left:231px;top:357px;" width="16" height="16" viewBox="0 0 16 16"><rect x="0" y="0" width="16" height="16" fill="#262626"/><path d="M6 3a2 2 0 0 1 4 0v5a2 2 0 0 1-4 0z" fill="#e04a4a"/><path d="M4 7.5a4 4 0 0 0 8 0M8 11.5v2.5" fill="none" stroke="#e04a4a" stroke-width="1"/><path d="M2 14 L14 2" stroke="#e04a4a" stroke-width="1.3"/></svg>
<div class="a" style="left:382px;top:290px;width:150px;height:84.5px;overflow:hidden;background:linear-gradient(90deg,#d9d3b6 0%,#e3ddc2 45%,#e6e0c4 80%,#dcd6bc 100%)"><div class="a" style="left:0;top:0;width:100%;height:100%;filter:blur(0.8px)"><div class="a" style="left:0px;top:0px;width:150px;height:6px;background:#d6d2c2;"></div><div class="a" style="left:0px;top:16px;width:52px;height:53px;background:#5a4634;"></div><div class="a" style="left:3px;top:22px;width:26px;height:30px;background:#cfc9b4;"></div><div class="a" style="left:3px;top:35px;width:26px;height:2px;background:#e8e4d8;"></div><div class="a" style="left:30px;top:22px;width:16px;height:40px;background:#b4a17a;"></div><div class="a" style="left:3px;top:52px;width:24px;height:17px;background:#2a2522;"></div><div class="a" style="left:0px;top:68px;width:35px;height:17px;background:#3a3530;"></div><div class="a" style="left:26px;top:44px;width:112px;height:60px;background:#8ea6cb;border-radius:28px 34px 0 0"></div><svg class="a" style="left:58px;top:48px" width="40" height="37"><path d="M4 0 L36 0 L22 30 L18 30z" fill="#8a6d5e"/><path d="M6 4 L14 37 L18 37 L9 4z" fill="#2f3848"/></svg><div class="a" style="left:54px;top:1px;width:46px;height:57px;background:#947260;border-radius:22px 22px 20px 20px"></div><div class="a" style="left:55px;top:5px;width:5px;height:22px;background:#3e3029;border-radius:4px 0 0 4px"></div><div class="a" style="left:95px;top:5px;width:5px;height:24px;background:#3e3029;border-radius:0 4px 4px 0"></div><div class="a" style="left:98px;top:28px;width:5px;height:16px;background:#8a6a58;border-radius:3px"></div><div class="a" style="left:56px;top:17px;width:20px;height:14px;background:rgba(120,130,130,.6);border:2px solid #3a3532;border-radius:3px"></div><div class="a" style="left:76px;top:17px;width:22px;height:14px;background:rgba(120,130,130,.6);border:2px solid #3a3532;border-radius:3px"></div><div class="a" style="left:64px;top:36px;width:26px;height:6px;background:#3a2a22;border-radius:4px 4px 1px 1px"></div><div class="a" style="left:132px;top:64px;width:18px;height:21px;background:#d8d8d6;"></div></div><div class="a" style="left:0px;top:66px;width:64px;height:18.5px;background:rgba(45,45,45,.6);"></div></div>
<div class="t" style="left:386.30px;top:360.00px;font-size:12px;color:#fff;letter-spacing:0.051px;">Navin Patil</div>
<div class="a" style="left:534px;top:289px;width:152px;height:86.5px;background:#8fc43b;"></div>
<div class="a" style="left:535.5px;top:290.5px;width:149px;height:83.5px;overflow:hidden;background:#d6d4d2"><div class="a" style="left:0;top:0;width:100%;height:100%;filter:blur(0.8px)"><div class="a" style="left:0px;top:0px;width:8px;height:84px;background:#e6e6e4;"></div><div class="a" style="left:8px;top:0px;width:17px;height:84px;background:#c9c8c6;"></div><div class="a" style="left:25px;top:6px;width:13px;height:60px;background:#3d2624;"></div><div class="a" style="left:5px;top:31px;width:14px;height:8px;background:#a82626;"></div><div class="a" style="left:3px;top:45px;width:18px;height:20px;background:repeating-linear-gradient(0deg,#4a4a4c 0 2px,#d0d0d0 2px 4px);"></div><div class="a" style="left:113px;top:26px;width:36px;height:58px;background:#e2dfda;"></div><div class="a" style="left:31px;top:43px;width:93px;height:50px;background:#dccabd;border-radius:34px 40px 0 0"></div><svg class="a" style="left:62px;top:42px" width="30" height="30"><path d="M2 0 H28 L16 26 H14z" fill="#c19a88"/></svg><div class="a" style="left:58px;top:2px;width:34px;height:44px;background:#3a2a28;border-radius:17px 17px 12px 12px"></div><div class="a" style="left:61px;top:7px;width:29px;height:37px;background:#b68c7a;border-radius:14px 14px 15px 15px"></div><div class="a" style="left:60px;top:15px;width:15px;height:9px;background:rgba(150,120,110,.4);border:1.6px solid #3a3030;border-radius:3px"></div><div class="a" style="left:76px;top:15px;width:15px;height:9px;background:rgba(150,120,110,.4);border:1.6px solid #3a3030;border-radius:3px"></div><div class="a" style="left:65px;top:32px;width:15px;height:4px;background:#6a2a2a;border-radius:2px"></div><div class="a" style="left:87px;top:29px;width:10px;height:15px;background:#222022;border-radius:3px"></div><div class="a" style="left:55px;top:27px;width:7px;height:12px;background:#2a2a2c;border-radius:3px"></div></div><div class="a" style="left:0px;top:65.5px;width:90px;height:18px;background:rgba(45,45,45,.6);"></div></div>
<div class="a" style="left:661.5px;top:293px;width:20.5px;height:20.5px;background:#0e72ed;border-radius:2px"></div>
<div class="a" style="left:666px;top:302px;width:2px;height:2px;background:#fff;"></div>
<div class="a" style="left:671px;top:302px;width:2px;height:2px;background:#fff;"></div>
<div class="a" style="left:676px;top:302px;width:2px;height:2px;background:#fff;"></div>
<div class="t" style="left:539.50px;top:360.00px;font-size:12px;color:#fff;letter-spacing:-0.132px;">Sarita Bhalerao</div>
<div class="a" style="left:688px;top:290px;width:150px;height:84px;overflow:hidden;background:linear-gradient(90deg,#b9b9b5 0%,#c6c6c2 30%,#cfcfcb 60%,#d8d8d4 100%)"><div class="a" style="left:0;top:0;width:100%;height:100%;filter:blur(0.8px)"><div class="a" style="left:18px;top:0px;width:8px;height:70px;background:#d6d6d2;"></div><div class="a" style="left:20px;top:0px;width:3px;height:70px;background:#e6e6e2;"></div><div class="a" style="left:35px;top:0px;width:7px;height:70px;background:#d6d6d2;"></div><div class="a" style="left:37px;top:0px;width:3px;height:70px;background:#e4e4e0;"></div><div class="a" style="left:44px;top:58px;width:110px;height:40px;background:#6f89b6;border-radius:24px 40px 0 0"></div><svg class="a" style="left:56px;top:48px" width="46" height="36"><path d="M0 0 H46 L30 36 H16z" fill="#3e2c24"/></svg><div class="a" style="left:54px;top:2px;width:50px;height:62px;background:#5e4334;border-radius:18px 18px 24px 24px"></div><div class="a" style="left:50px;top:0px;width:54px;height:14px;background:#1e1614;border-radius:0 0 8px 8px"></div><div class="a" style="left:50px;top:0px;width:6px;height:30px;background:#1e1614;border-radius:0 0 3px 3px"></div><div class="a" style="left:98px;top:0px;width:5px;height:28px;background:#1e1614;"></div><div class="a" style="left:66px;top:22px;width:10px;height:4px;background:#2a1d18;border-radius:2px"></div><div class="a" style="left:83px;top:22px;width:10px;height:4px;background:#2a1d18;border-radius:2px"></div><div class="a" style="left:70px;top:42px;width:22px;height:7px;background:#1a1210;border-radius:4px 4px 2px 2px"></div></div><div class="a" style="left:0px;top:66px;width:102px;height:18px;background:rgba(45,45,45,.6);"></div></div>
<div class="t" style="left:691.90px;top:360.00px;font-size:12px;color:#fff;letter-spacing:-0.268px;">Abhay Pawar(TO...</div>
<div class="a" style="left:838px;top:289px;width:154px;height:87px;background:#222;"></div>
<svg class="a" style="left:841px;top:357px;" width="16" height="16" viewBox="0 0 16 16"><rect x="0" y="0" width="16" height="16" fill="#262626"/><path d="M6 3a2 2 0 0 1 4 0v5a2 2 0 0 1-4 0z" fill="#e04a4a"/><path d="M4 7.5a4 4 0 0 0 8 0M8 11.5v2.5" fill="none" stroke="#e04a4a" stroke-width="1"/><path d="M2 14 L14 2" stroke="#e04a4a" stroke-width="1.3"/></svg>
<div class="t" style="left:861.60px;top:326.00px;font-size:13.5px;color:#fff;font-weight:700;letter-spacing:-0.246px;">DR DEEPA KALA</div>
<div class="a" style="left:992px;top:289.5px;width:151px;height:86.5px;background:#202020;"></div>
<div class="a" style="left:1031px;top:295px;width:75px;height:75px;overflow:hidden;background:#d6d4cc"><div class="a" style="left:0;top:0;width:100%;height:100%;filter:blur(0.8px)"><div class="a" style="left:0;top:0;width:75px;height:10px;background:#e4e2dc"></div><div class="a" style="left:0;top:10px;width:12px;height:65px;background:#8b8680"></div><div class="a" style="left:9px;top:10px;width:19px;height:17px;background:#1b1d24;border:1px solid #777"></div><div class="a" style="left:4px;top:30px;width:26px;height:12px;background:#c8c8c8"></div><div class="a" style="left:6px;top:42px;width:18px;height:33px;background:#9a9894"></div><div class="a" style="left:58px;top:38px;width:17px;height:37px;background:#a59a85"></div><div class="a" style="left:55px;top:35px;width:10px;height:20px;background:#2a2a2a"></div><div class="a" style="left:36px;top:2px;width:17px;height:40px;border-radius:8px 8px 4px 4px;background:#7ba8d6"></div><div class="a" style="left:26px;top:26px;width:34px;height:30px;border-radius:12px 12px 4px 4px;background:#80acd9"></div><div class="a" style="left:18px;top:48px;width:34px;height:22px;background:#7aa6d3"></div><div class="a" style="left:40px;top:9px;width:11px;height:4px;background:#2a3344"></div></div><div class="a" style="left:0;top:61px;width:62px;height:14px;background:rgba(35,35,35,.7)"></div></div>
<div class="a" style="left:994px;top:356px;width:37px;height:14px;background:#282828;"></div>
<div class="t" style="left:997.20px;top:361.00px;font-size:11.5px;color:#f0f0f0;letter-spacing:0.047px;">201890047 SAN...</div>
<svg class="a" style="left:1155px;top:316px;" width="32" height="32" viewBox="0 0 32 32"><circle cx="16" cy="16" r="14.5" fill="#1a73e8" stroke="#fff" stroke-width="2.2"/><path d="M13.5 10 L19 16 L13.5 22" fill="none" stroke="#fff" stroke-width="1.8"/></svg>
<div class="a" style="left:179px;top:377px;width:1015px;height:258px;background:#000;"></div>
<div class="a" style="left:305.5px;top:377px;width:762px;height:258px;background:#fff;"></div>
<div class="a" style="left:55px;top:385px;width:21.5px;height:21.5px;background:#111;border-radius:3px"></div>
<svg class="a" style="left:58px;top:388px;" width="16" height="16" viewBox="0 0 16 16"><circle cx="8" cy="8" r="6.5" fill="none" stroke="#ccc" stroke-width="1.1"/><rect x="7.4" y="7" width="1.3" height="5" fill="#ccc"/><rect x="7.4" y="4.3" width="1.3" height="1.4" fill="#ccc"/></svg>
<div class="a" style="left:84.5px;top:385px;width:22px;height:21.5px;background:#111;border-radius:3px"></div>
<svg class="a" style="left:89px;top:388px;" width="14" height="16" viewBox="0 0 14 16"><path d="M7 0.8 L12.8 3 V7.5c0 3.6-2.6 6.2-5.8 7.5C3.8 13.7 1.2 11.1 1.2 7.5V3z" fill="#23d160"/><path d="M4.3 8 L6.3 10 L9.8 6" fill="none" stroke="#1a1a1a" stroke-width="1.4"/></svg>
<div class="a" style="left:117px;top:388px;width:17px;height:17px;border-radius:50%;background:radial-gradient(circle,#ff6a5a 0 35%,rgba(255,80,60,.45) 55%,rgba(255,60,40,0) 75%)"></div>
<div class="t" style="left:136.80px;top:391.00px;font-size:11.5px;color:#e6e6e6;letter-spacing:-0.365px;">Recording</div>
<div class="a" style="left:194.5px;top:385px;width:133.5px;height:24.5px;background:rgba(89,89,89,.52);border-radius:3px"></div>
<div class="a" style="left:329px;top:385px;width:15.5px;height:24.5px;background:rgba(89,89,89,.52);border-radius:3px"></div>
<svg class="a" style="left:333px;top:394px;" width="8" height="5" viewBox="0 0 8 5"><path d="M0 0h7L3.5 4z" fill="#ddd"/></svg>
<div class="t" style="left:203.80px;top:391.00px;font-size:11.5px;color:#eee;letter-spacing:-0.185px;">Turn on Original Sound</div>
<div class="a" style="left:343px;top:414.5px;width:227px;height:8px;background:#1f3161;"></div>
<div class="a" style="left:573.5px;top:414.5px;width:225.5px;height:8px;background:#4a90c0;"></div>
<div class="a" style="left:803px;top:414.5px;width:226px;height:8px;background:#9a9da5;"></div>
<div class="a" style="left:343px;top:427px;width:686px;height:104.5px;background:#1f3161;"></div>
<div class="t" style="left:350.50px;top:479.00px;font-size:33.7px;color:#fff;letter-spacing:0.053px;-webkit-text-stroke:0;">ERYTHROPOIESIS AND IRON</div>
<div class="a" style="left:339px;top:533px;width:684px;height:102px;background:#ecf1e3;"></div>
<div class="a" style="left:347.8px;top:546px;width:6.8px;height:6.8px;background:#4a90c0;"></div>
<div class="a" style="left:347.8px;top:600px;width:6.8px;height:6.8px;background:#4a90c0;"></div>
<div class="t" style="left:372.50px;top:540.00px;font-size:18.0px;color:#3e3e3e;word-spacing:0.682px;-webkit-text-stroke:0;">The first process  related to the proliferation and maturation of progenitors BFU-</div>
<div class="t" style="left:372.5px;top:561.6px;font-size:18.0px;color:#3c3c3c;-webkit-text-stroke:0">e and CFU-e is <b>erythropoietin</b> dependent</div>
<div class="t" style="left:372.50px;top:594.00px;font-size:18.0px;color:#3e3e3e;word-spacing:0.957px;-webkit-text-stroke:0;">The second process ,i.e  the differentiation process from proerythroblasts to red</div>
<div class="t" style="left:372.5px;top:614.7px;font-size:18.0px;color:#3c3c3c;-webkit-text-stroke:0">cells is gradually less EPO responsive, but strongly <b>iron dependent</b></div>
<div class="a" style="left:1259px;top:209px;width:21px;height:426px;background:#e8e8e8;"></div>
<div class="a" style="left:1263px;top:225px;width:13.7px;height:395px;background:#dadada;"></div>
<div class="a" style="left:1263px;top:210.8px;width:13.7px;height:13.5px;background:#fff;border:1px solid #c4c4c4"></div>
<svg class="a" style="left:1266px;top:214px;" width="9" height="6" viewBox="0 0 9 6"><path d="M0.5 5.5 L4.5 1 L8.5 5.5z" fill="#666"/></svg>
<div class="a" style="left:1263.3px;top:322px;width:13.2px;height:202.5px;background:#fff;border:1px solid #b8b8b8"></div>
<div class="a" style="left:1263px;top:620px;width:13.7px;height:14px;background:#fff;border:1px solid #c4c4c4"></div>
<svg class="a" style="left:1266px;top:624px;" width="9" height="6" viewBox="0 0 9 6"><path d="M0.5 0.5 L4.5 5 L8.5 0.5z" fill="#666"/></svg>
<div class="a" style="left:0px;top:635px;width:1280px;height:27px;background:#e6e6e6;"></div>
<div class="a" style="left:0px;top:661px;width:1280px;height:1px;background:#d0d0d0;"></div>
<svg class="a" style="left:24px;top:644px;" width="6" height="8" viewBox="0 0 6 8"><path d="M5.5 0.5 V7.5 L0.5 4z" fill="#217346"/></svg>
<svg class="a" style="left:51px;top:644px;" width="6" height="8" viewBox="0 0 6 8"><path d="M0.5 0.5 V7.5 L5.5 4z" fill="#c0c0c0"/></svg>
<div class="a" style="left:76px;top:650px;width:2px;height:2px;background:#217346;"></div>
<div class="a" style="left:80px;top:650px;width:2px;height:2px;background:#217346;"></div>
<div class="a" style="left:84px;top:650px;width:2px;height:2px;background:#217346;"></div>
<div class="a" style="left:94px;top:639px;width:1px;height:18px;background:#c4c4c4;"></div>
<div class="a" style="left:155px;top:639px;width:1px;height:18px;background:#c4c4c4;"></div>
<div class="a" style="left:216px;top:639px;width:1px;height:18px;background:#c4c4c4;"></div>
<div class="a" style="left:277px;top:639px;width:1px;height:18px;background:#c4c4c4;"></div>
<div class="a" style="left:338px;top:639px;width:1px;height:18px;background:#c4c4c4;"></div>
<div class="a" style="left:520px;top:639px;width:1px;height:18px;background:#c4c4c4;"></div>
<div class="a" style="left:581px;top:639px;width:1px;height:18px;background:#c4c4c4;"></div>
<div class="a" style="left:648px;top:639px;width:1px;height:18px;background:#c4c4c4;"></div>
<div class="t" style="left:106.00px;top:643.00px;font-size:11.2px;color:#555;letter-spacing:0.153px;">Sheet2</div>
<div class="t" style="left:167.00px;top:643.00px;font-size:11.2px;color:#555;letter-spacing:0.153px;">Sheet3</div>
<div class="t" style="left:228.00px;top:643.00px;font-size:11.2px;color:#555;letter-spacing:0.153px;">Sheet4</div>
<div class="t" style="left:289.00px;top:643.00px;font-size:11.2px;color:#555;letter-spacing:0.153px;">Sheet5</div>
<div class="t" style="left:349.40px;top:643.00px;font-size:11.2px;color:#555;letter-spacing:0.273px;">Sheet6</div>
<div class="t" style="left:471.30px;top:643.00px;font-size:11.2px;color:#555;letter-spacing:0.253px;">Sheet8</div>
<div class="t" style="left:532.20px;top:643.00px;font-size:11.2px;color:#555;letter-spacing:0.273px;">Sheet9</div>
<div class="t" style="left:593.00px;top:643.00px;font-size:11.2px;color:#555;letter-spacing:0.257px;">Sheet10</div>
<div class="a" style="left:398.5px;top:635px;width:61px;height:23px;background:#fff;"></div>
<div class="a" style="left:398.5px;top:656px;width:61px;height:2px;background:#217346;"></div>
<div class="t" style="left:409.40px;top:643.00px;font-size:11.2px;color:#217346;font-weight:700;letter-spacing:0.327px;">Sheet7</div>
<svg class="a" style="left:678px;top:640px;" width="17" height="17" viewBox="0 0 17 17"><circle cx="8.5" cy="8.5" r="7" fill="none" stroke="#888" stroke-width="1.5"/><path d="M8.5 4.5v8M4.5 8.5h8" stroke="#777" stroke-width="1.6"/></svg>
<div class="a" style="left:767.5px;top:643px;width:1.5px;height:1.5px;background:#999;"></div>
<div class="a" style="left:767.5px;top:648px;width:1.5px;height:1.5px;background:#999;"></div>
<div class="a" style="left:767.5px;top:653px;width:1.5px;height:1.5px;background:#999;"></div>
<div class="a" style="left:783px;top:641px;width:478px;height:14px;background:#e0e0e0;"></div>
<div class="a" style="left:783px;top:641px;width:14.5px;height:14px;background:#fff;border:1px solid #c8c8c8"></div>
<svg class="a" style="left:787px;top:644.5px;" width="6" height="7" viewBox="0 0 6 7"><path d="M5 0.5 V6.5 L0.5 3.5z" fill="#555"/></svg>
<div class="a" style="left:797.5px;top:641px;width:373px;height:14px;background:#fff;border:1px solid #c8c8c8"></div>
<div class="a" style="left:1246.5px;top:641px;width:14.5px;height:14px;background:#fff;border:1px solid #c8c8c8"></div>
<svg class="a" style="left:1251px;top:644.5px;" width="6" height="7" viewBox="0 0 6 7"><path d="M0.5 0.5 V6.5 L5 3.5z" fill="#555"/></svg>
<div class="a" style="left:0px;top:662px;width:1280px;height:20px;background:#f3f3f3;"></div>
<div class="a" style="left:999px;top:661.5px;width:37px;height:19.5px;background:#cbcbcb;"></div>
<svg class="a" style="left:1010px;top:665px;" width="14" height="12" viewBox="0 0 14 12"><rect x="0.5" y="0.5" width="12.5" height="11" fill="none" stroke="#666" stroke-width="1"/><path d="M0.5 4.2h12.5M0.5 7.8h12.5M4.7 0.5v11M8.8 0.5v11" stroke="#666" stroke-width="1"/></svg>
<svg class="a" style="left:1048.5px;top:664.5px;" width="14" height="13" viewBox="0 0 14 13"><rect x="0.8" y="0.8" width="12" height="11" fill="none" stroke="#666" stroke-width="1.2"/><rect x="3.3" y="2.8" width="7" height="7" fill="none" stroke="#666" stroke-width="1"/><path d="M5 5.3h3.6M5 7.5h3.6" stroke="#666" stroke-width="0.9"/></svg>
<svg class="a" style="left:1085.5px;top:664.5px;" width="14" height="13" viewBox="0 0 14 13"><rect x="0.8" y="0.8" width="12" height="11" fill="none" stroke="#666" stroke-width="1.2"/><path d="M0.8 6.3 H8 V0.8 M4.8 0.8 V6.3" fill="none" stroke="#666" stroke-width="1.1"/></svg>
<div class="a" style="left:1117px;top:670px;width:7px;height:1.2px;background:#555;"></div>
<div class="a" style="left:1130px;top:670px;width:92px;height:1px;background:#b0b0b0;"></div>
<div class="a" style="left:1174px;top:665.5px;width:4.5px;height:10px;background:#666;"></div>
<div class="a" style="left:1227px;top:670px;width:8px;height:1.2px;background:#555;"></div>
<div class="a" style="left:1230.5px;top:666.5px;width:1.2px;height:8px;background:#555;"></div>
<div class="t" style="left:1248.00px;top:665.00px;font-size:10.5px;color:#444;letter-spacing:-0.840px;">100%</div>
<div class="a" style="left:0;top:682px;width:1280px;height:37px;background:linear-gradient(90deg,#1b3843 0%,#1b3540 30%,#1a2e42 60%,#1a2843 100%)"></div>
<svg class="a" style="left:15px;top:692px;" width="16" height="16" viewBox="0 0 16 16"><path d="M0 2.2 L6.6 1.3 V7.4 H0z M7.4 1.2 L15.5 0 V7.4 H7.4z M0 8.2 H6.6 V14.3 L0 13.4z M7.4 8.2 H15.5 V15.6 L7.4 14.4z" fill="#fff"/></svg>
<div class="a" style="left:45px;top:682px;width:322px;height:37px;background:#f2f2f2;"></div>
<svg class="a" style="left:55px;top:692px;" width="18" height="17" viewBox="0 0 18 17"><circle cx="11" cy="6.5" r="5" fill="none" stroke="#222" stroke-width="1.3"/><path d="M7.3 10.2 L1.5 16" stroke="#222" stroke-width="1.4"/></svg>
<div class="t" style="left:82.90px;top:695.00px;font-size:13.6px;color:#333;">Type here to search</div>
<svg class="a" style="left:381px;top:693px;" width="16" height="16" viewBox="0 0 16 16"><circle cx="8" cy="8" r="6.3" fill="none" stroke="#fff" stroke-width="1.5"/></svg>
<svg class="a" style="left:425px;top:692px;" width="19" height="16" viewBox="0 0 19 16"><rect x="1" y="4" width="11" height="8" fill="none" stroke="#fff" stroke-width="1.2"/><path d="M1 1.5h11M1 14.5h11M15 2v12M17.5 2v12" stroke="#fff" stroke-width="1.2"/></svg>
<svg class="a" style="left:470px;top:688px;" width="24" height="24" viewBox="0 0 24 24"><path d="M8 5 a4 4 0 0 1 8 0" fill="none" stroke="#fff" stroke-width="1.4"/><rect x="1" y="5.5" width="22" height="17.5" fill="#fff"/><rect x="7.5" y="10" width="4" height="4" fill="#f25022"/><rect x="12.5" y="10" width="4" height="4" fill="#7fba00"/><rect x="7.5" y="15" width="4" height="4" fill="#00a4ef"/><rect x="12.5" y="15" width="4" height="4" fill="#ffb900"/></svg>
<svg class="a" style="left:517px;top:690px;" width="23" height="21" viewBox="0 0 23 21"><path d="M0.5 2 h8 l2 2 h12 v16 h-22z" fill="#e8b53b"/><rect x="0.5" y="6" width="22" height="14" fill="#f8d775"/><rect x="6" y="12" width="11" height="8" fill="#3b86c6"/><rect x="8" y="14" width="7" height="3" fill="#2a6ba8"/></svg>
<div class="a" style="left:510px;top:716.5px;width:37px;height:2.5px;background:#76b9ed;"></div>
<svg class="a" style="left:561px;top:689px;" width="26" height="22" viewBox="0 0 26 22"><path d="M1 8 L13 1 L25 8 V21 H1z" fill="#1c83d6"/><path d="M1 8 L13 15 L25 8" fill="none" stroke="#fff" stroke-width="1.3"/><path d="M1 21 L10 13 M25 21 L16 13" stroke="#5db0f0" stroke-width="1"/></svg>
<div class="a" style="left:598px;top:682px;width:45px;height:37px;background:#46525b;"></div>
<svg class="a" style="left:607px;top:689px;" width="26" height="22" viewBox="0 0 26 22"><rect x="8" y="1" width="17" height="20" rx="1.5" fill="#21a366"/><rect x="8" y="7.5" width="17" height="7" fill="#107c41"/><rect x="16" y="1" width="9" height="6.5" fill="#33c481"/><rect x="16" y="14.5" width="9" height="6.5" fill="#185c37"/><rect x="1" y="4.5" width="13" height="13" rx="1" fill="#107c41"/><path d="M4.5 7.5 L10.5 14.5 M10.5 7.5 L4.5 14.5" stroke="#fff" stroke-width="1.7"/></svg>
<div class="a" style="left:598px;top:716.5px;width:45px;height:2.5px;background:#76b9ed;"></div>
<svg class="a" style="left:654px;top:688px;" width="25" height="25" viewBox="0 0 25 25"><circle cx="12.5" cy="12.5" r="11.5" fill="#1b7fd1"/><path d="M2.5 9 C5 2 16 0 21.5 6 C24 9 23.5 13 20 14 C16 15 12.5 14 12 11 C11 7 5 6 2.5 9z" fill="#5fd36c"/><path d="M12 11 C9 12 8 17 12 20 C15 22 20 21 23 18" fill="none" stroke="#fff" stroke-width="1" opacity=".3"/><circle cx="14.5" cy="14" r="4" fill="#0b4f9e"/></svg>
<div class="a" style="left:647px;top:716.5px;width:37px;height:2.5px;background:#76b9ed;"></div>
<svg class="a" style="left:1091px;top:695px;" width="13" height="9" viewBox="0 0 13 9"><path d="M1 8 L6.5 2 L12 8" fill="none" stroke="#fff" stroke-width="1.3"/></svg>
<svg class="a" style="left:1112px;top:696px;" width="17" height="10" viewBox="0 0 17 10"><rect x="1" y="1.5" width="13" height="7" fill="none" stroke="#fff" stroke-width="1.1"/><rect x="3" y="3.5" width="9" height="3" fill="#fff"/><rect x="14.5" y="3.5" width="1.5" height="3" fill="#fff"/></svg>
<div class="t" style="left:1136.30px;top:695.00px;font-size:10.5px;color:#fff;letter-spacing:-0.443px;">ENG</div>
<div class="t" style="left:1184.30px;top:687.00px;font-size:10.5px;color:#fff;letter-spacing:-0.059px;">16:46</div>
<div class="t" style="left:1169.80px;top:704.00px;font-size:10.5px;color:#fff;letter-spacing:0.181px;">06-09-2020</div>
<svg class="a" style="left:1240px;top:691px;" width="26" height="26" viewBox="0 0 26 26"><path d="M1 2h16v11.5h-8l-4 4v-4H1z" fill="#fff"/><path d="M4 5h10M4 7.5h10M4 10h6" stroke="#1a2843" stroke-width="1.1"/><circle cx="16" cy="16.3" r="7" fill="#2e2e30" stroke="#8a8a8a" stroke-width="1.3"/></svg>
<div class="t" style="left:1252.2px;top:702.5px;font-size:10.5px;font-weight:700;color:#f4f4f4">2</div>
<div class="a" style="left:1275px;top:682px;width:1px;height:37px;background:#5a6a80;"></div>
</body></html>
